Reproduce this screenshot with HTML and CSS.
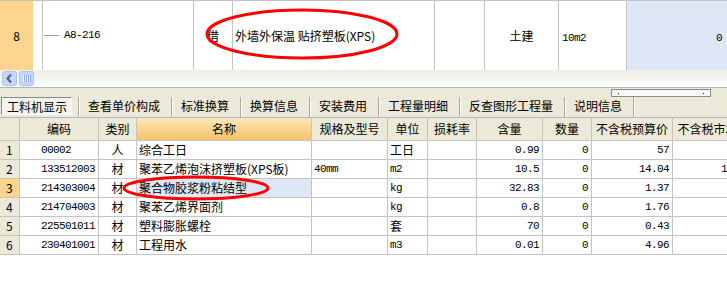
FILE: index.html
```html
<!DOCTYPE html>
<html lang="zh-CN">
<head>
  <meta charset="UTF-8" />
  <title>工料机显示</title>
  <link rel="stylesheet" href="styles.css">
</head>
<body>
  <div class="page">
    <!-- upper grid: one quota row -->
    <div class="top-row">
      <div class="cell row-num">8</div>
      <div class="cell gap-cell"></div>
      <div class="cell code-cell"><span class="tree-line"></span><span class="mono">A8-216</span></div>
      <div class="cell type-cell">借</div>
      <div class="cell name-cell">外墙外保温 贴挤塑板(XPS)</div>
      <div class="cell blank-cell"></div>
      <div class="cell major-cell">土建</div>
      <div class="cell unit-cell"><span class="mono">10m2</span></div>
      <div class="cell qty-cell"><span class="mono">0</span></div>
    </div>

    <div class="hscroll">
      <svg class="sbtn" width="15" height="15" viewBox="0 0 15 15">
        <rect x="0.5" y="0.5" width="14" height="14" rx="2" fill="#c6d6fc" stroke="#aec3f0"/>
        <path d="M9 3.5 L5.5 7.5 L9 11.5" fill="none" stroke="#4d6185" stroke-width="2"/>
      </svg>
      <svg class="sbtn" width="15" height="15" viewBox="0 0 15 15">
        <rect x="0.5" y="0.5" width="14" height="14" rx="2" fill="#c6d6fc" stroke="#aec3f0"/>
        <path d="M4.5 4 V11 M6.5 4 V11 M8.5 4 V11 M10.5 4 V11" stroke="#eef3fe" stroke-width="1"/>
        <path d="M5.5 4 V11 M7.5 4 V11 M9.5 4 V11 M11.5 4 V11" stroke="#8fa8dd" stroke-width="1"/>
      </svg>
    </div>

    <div class="tabbar">
      <div class="mini-row">
        <div class="mini-bar"><i></i><i></i></div>
      </div>
      <div class="tabs">
        <span class="tab active">工料机显示</span>
        <span class="tab">查看单价构成</span>
        <span class="tab">标准换算</span>
        <span class="tab">换算信息</span>
        <span class="tab">安装费用</span>
        <span class="tab">工程量明细</span>
        <span class="tab">反查图形工程量</span>
        <span class="tab">说明信息</span>
        <span class="tab-end"></span>
      </div>
    </div>

    <div class="grid">
      <div class="hd"></div>
      <div class="hd">编码</div>
      <div class="hd">类别</div>
      <div class="hd hd-sort">名称</div>
      <div class="hd">规格及型号</div>
      <div class="hd">单位</div>
      <div class="hd">损耗率</div>
      <div class="hd">含量</div>
      <div class="hd">数量</div>
      <div class="hd">不含税预算价</div>
      <div class="hd">不含税市场价</div>

      <div class="rn">1</div>
      <div class="code mono">00002</div>
      <div class="kind">人</div>
      <div class="txt">综合工日</div>
      <div class="txt"></div>
      <div class="txt">工日</div>
      <div class="txt"></div>
      <div class="val mono">0.99</div>
      <div class="val mono">0</div>
      <div class="val mono">57</div>
      <div class="val mono"></div>

      <div class="rn">2</div>
      <div class="code mono">133512003</div>
      <div class="kind">材</div>
      <div class="txt">聚苯乙烯泡沫挤塑板(XPS板)</div>
      <div class="txt mono">40mm</div>
      <div class="txt mono">m2</div>
      <div class="txt"></div>
      <div class="val mono">10.5</div>
      <div class="val mono">0</div>
      <div class="val mono">14.04</div>
      <div class="val mono">14.04</div>

      <div class="rn rn-cur">3</div>
      <div class="code mono">214303004</div>
      <div class="kind">材</div>
      <div class="txt sel">聚合物胶浆粉粘结型</div>
      <div class="txt"></div>
      <div class="txt mono">kg</div>
      <div class="txt"></div>
      <div class="val mono">32.83</div>
      <div class="val mono">0</div>
      <div class="val mono">1.37</div>
      <div class="val mono"></div>

      <div class="rn">4</div>
      <div class="code mono">214704003</div>
      <div class="kind">材</div>
      <div class="txt">聚苯乙烯界面剂</div>
      <div class="txt"></div>
      <div class="txt mono">kg</div>
      <div class="txt"></div>
      <div class="val mono">0.8</div>
      <div class="val mono">0</div>
      <div class="val mono">1.76</div>
      <div class="val mono"></div>

      <div class="rn">5</div>
      <div class="code mono">225501011</div>
      <div class="kind">材</div>
      <div class="txt">塑料膨胀螺栓</div>
      <div class="txt"></div>
      <div class="txt">套</div>
      <div class="txt"></div>
      <div class="val mono">70</div>
      <div class="val mono">0</div>
      <div class="val mono">0.43</div>
      <div class="val mono"></div>

      <div class="rn">6</div>
      <div class="code mono">230401001</div>
      <div class="kind">材</div>
      <div class="txt">工程用水</div>
      <div class="txt"></div>
      <div class="txt mono">m3</div>
      <div class="txt"></div>
      <div class="val mono">0.01</div>
      <div class="val mono">0</div>
      <div class="val mono">4.96</div>
      <div class="val mono"></div>
    </div>

    <!-- red hand-drawn marks -->
    <svg class="marks" width="727" height="294" viewBox="0 0 727 294">
      <ellipse cx="302" cy="34" rx="95" ry="24" fill="none" stroke="#ff0000" stroke-width="3"/>
      <ellipse cx="196" cy="188" rx="72" ry="11" fill="none" stroke="#ff0000" stroke-width="3"/>
    </svg>
  </div>
</body>
</html>
```

FILE: styles.css
```css
* {
  margin: 0;
  padding: 0;
  box-sizing: border-box;
}

body {
  font-family: "Noto Sans CJK SC", "DejaVu Sans", sans-serif;
  font-size: 12px;
  color: #000;
  background: #fff;
}

.page {
  position: relative;
  width: 727px;
  height: 294px;
  overflow: hidden;
}

.mono {
  font-family: "Liberation Mono", "DejaVu Sans Mono", monospace;
  font-size: 11px;
  letter-spacing: -0.6px;
}

/* Upper grid row */
.top-row {
  display: flex;
  height: 70px;
  border-top: 1px solid #c4c4c4;
  line-height: 69px;
}

.top-row .cell {
  border-right: 1px solid #c4c4c4;
  white-space: nowrap;
}

.row-num {
  width: 33px;
  background: #fdd58f;
  text-align: center;
  border-right: none !important;
}

.gap-cell {
  width: 10px;
}

.code-cell {
  width: 151px;
  display: flex;
  align-items: center;
}

.tree-line {
  display: inline-block;
  width: 15px;
  height: 1px;
  margin: 0 5px 0 1px;
  background: #a0a0a0;
}

.type-cell {
  width: 39px;
  text-align: center;
}

.name-cell {
  width: 202px;
  padding-left: 2px;
}

.blank-cell {
  width: 50px;
}

.major-cell {
  width: 74px;
  text-align: center;
}

.unit-cell {
  width: 68px;
  padding-left: 3px;
}

.qty-cell {
  flex: 1;
  background: #dde7f5;
  text-align: right;
  padding-right: 5px;
  border-right: none !important;
}

/* Horizontal scroll strip */
.hscroll {
  display: flex;
  gap: 2px;
  height: 18px;
  padding: 1px 0 0 2px;
  background: linear-gradient(#efede6, #fdfdfb);
  border-bottom: 1px solid #a7b5c8;
}

.sbtn {
  display: block;
}

/* Tab bar */
.tabbar {
  background: #ece9d8;
  border-bottom: 1px solid #a9b8cc;
  height: 30px;
  padding-top: 1px;
}

.mini-row {
  display: flex;
  justify-content: flex-end;
  height: 8px;
  padding-right: 16px;
}

.mini-bar {
  width: 100px;
  height: 8px;
  border: 1px solid #8a8a8a;
  background: #f7f7f5;
  display: flex;
  justify-content: space-between;
  align-items: center;
  padding: 0 6px;
}

.mini-bar i {
  display: block;
  width: 1px;
  height: 1px;
  background: #202060;
}

.tabs {
  display: flex;
  height: 20px;
  line-height: 18px;
  white-space: nowrap;
}

.tab {
  padding: 0 11px 0 9px;
  border-left: 1px solid #aca899;
  box-shadow: inset 1px 0 0 #fff;
}

.tab.active {
  margin: 0 6px 2px 1px;
  padding: 0 4px 0 5px;
  border: 1px solid;
  border-color: #8a8a80 #fff #fff #8a8a80;
  background: #f5f4ee;
  box-shadow: none;
}

.tab-end {
  border-left: 1px solid #aca899;
  box-shadow: inset 1px 0 0 #fff;
  width: 2px;
}

/* Lower grid */
.grid {
  display: grid;
  grid-template-columns: 20px 79px 38px 175px 76px 40px 49px 66px 49px 81px 82px;
  grid-template-rows: 23px;
  grid-auto-rows: 19px;
  width: 755px;
}

.grid > div {
  border-right: 1px solid #c4c4c4;
  border-bottom: 1px solid #c4c4c4;
  white-space: nowrap;
  overflow: hidden;
  line-height: 18px;
}

.grid .hd {
  background: #ece9d8;
  text-align: center;
  line-height: 22px;
  border-color: #c8c6b8;
}

.grid .hd-sort {
  background: linear-gradient(#fde8b8, #f5c26c);
}

.grid .rn {
  background: #ece9d8;
  padding-left: 6px;
  border-color: #c8c6b8;
}

.grid .rn-cur {
  background: #fed38d;
}

.grid .code {
  padding-left: 21px;
}

.grid .kind {
  text-align: center;
}

.grid .txt {
  padding-left: 2px;
}

.grid .val {
  text-align: right;
  padding-right: 3px;
}

.grid .sel {
  background: #dde7f5;
}

.marks {
  position: absolute;
  left: 0;
  top: 0;
  pointer-events: none;
}
```
